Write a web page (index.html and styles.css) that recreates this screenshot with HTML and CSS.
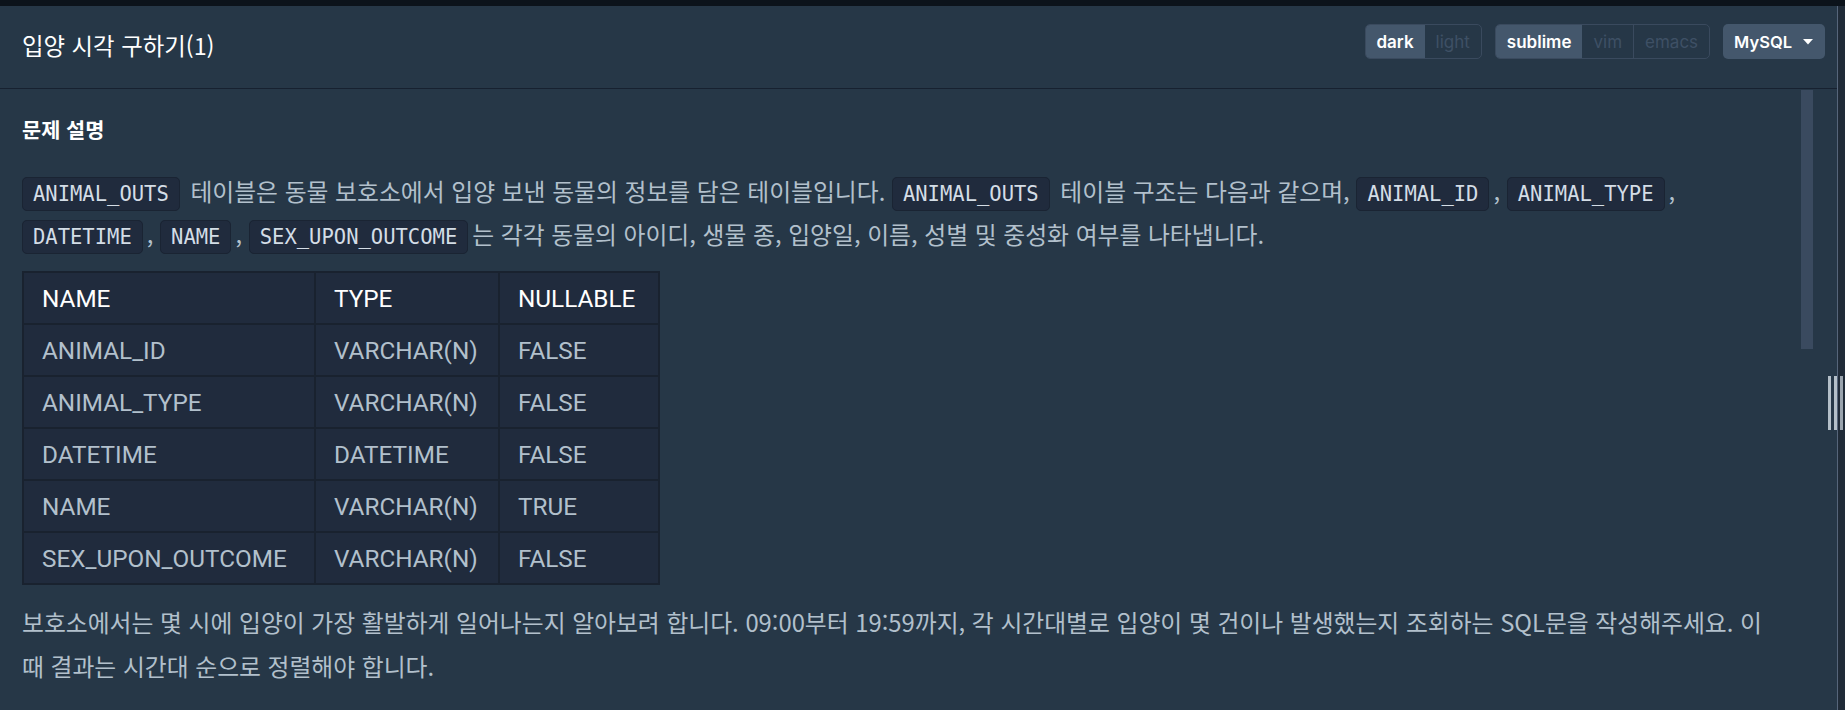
FILE: index.html
```html
<!DOCTYPE html>
<html lang="ko">
<head>
<meta charset="utf-8">
<title>입양 시각 구하기(1)</title>
<link rel="stylesheet" href="styles.css">
</head>
<body>
<div class="topbar"></div>
<div class="app">
  <div class="pane">
    <header class="head">
      <h1 class="title">입양 시각 구하기(1)</h1>
      <div class="controls">
        <div class="seg"><span class="opt on">dark</span><span class="opt">light</span></div>
        <div class="seg"><span class="opt on">sublime</span><span class="opt">vim</span><span class="opt sep">emacs</span></div>
        <button class="lang">MySQL<svg class="caret" width="10" height="6" viewBox="0 0 10 6"><path d="M0 0h10L5 5.5z" fill="#fff"/></svg></button>
      </div>
    </header>
    <div class="body">
      <div class="content">
        <h5 class="section">문제 설명</h5>
        <p class="desc"><code>ANIMAL_OUTS</code> 테이블은 동물 보호소에서 입양 보낸 동물의 정보를 담은 테이블입니다. <code>ANIMAL_OUTS</code> 테이블 구조는 다음과 같으며, <code>ANIMAL_ID</code>, <code>ANIMAL_TYPE</code>, <code>DATETIME</code>, <code>NAME</code>, <code>SEX_UPON_OUTCOME</code>는 각각 동물의 아이디, 생물 종, 입양일, 이름, 성별 및 중성화 여부를 나타냅니다.</p>
        <table class="schema">
          <thead>
            <tr><th class="c1">NAME</th><th class="c2">TYPE</th><th class="c3">NULLABLE</th></tr>
          </thead>
          <tbody>
            <tr><td>ANIMAL_ID</td><td>VARCHAR(N)</td><td>FALSE</td></tr>
            <tr><td>ANIMAL_TYPE</td><td>VARCHAR(N)</td><td>FALSE</td></tr>
            <tr><td>DATETIME</td><td>DATETIME</td><td>FALSE</td></tr>
            <tr><td>NAME</td><td>VARCHAR(N)</td><td>TRUE</td></tr>
            <tr><td>SEX_UPON_OUTCOME</td><td>VARCHAR(N)</td><td>FALSE</td></tr>
          </tbody>
        </table>
        <p class="desc last">보호소에서는 몇 시에 입양이 가장 활발하게 일어나는지 알아보려 합니다. 09:00부터 19:59까지, 각 시간대별로 입양이 몇 건이나 발생했는지 조회하는 SQL문을 작성해주세요. 이때 결과는 시간대 순으로 정렬해야 합니다.</p>
      </div>
      <div class="scroll"><div class="thumb"></div></div>
    </div>
  </div>
  <div class="side">
    <div class="grip"><i></i><i></i><i></i></div>
  </div>
</div>
</body>
</html>
```

FILE: styles.css
```css
* { box-sizing: border-box; }
html, body {
  margin: 0;
  height: 100%;
  overflow: hidden;
  background: #263747;
  font-family: "Noto Sans CJK KR", "Noto Sans", sans-serif;
}
.topbar {
  height: 6px;
  background: #0c131b;
}
.app {
  display: flex;
  height: 704px;
}
.pane {
  width: 1838px;
  border-right: 1px solid #56657a;
  display: flex;
  flex-direction: column;
}
.side {
  flex: 1;
  background: #202b38;
  position: relative;
}
.grip {
  position: absolute;
  left: -10px;
  top: 370px;
  display: flex;
  gap: 3px;
}
.grip i {
  display: block;
  width: 3px;
  height: 54px;
  background: #b4bfc8;
}
.grip i:nth-child(3) { background: #9aa4ae; }

.head {
  height: 83px;
  flex: none;
  border-bottom: 1px solid #172130;
  display: flex;
  align-items: center;
  justify-content: space-between;
  padding: 0 12px 4px 22px;
}
.title {
  margin: 0;
  font-size: 23.4px;
  font-weight: 400;
  color: #fff;
  line-height: 30px;
}
.controls {
  align-self: flex-start;
  margin-top: 18px;
  display: flex;
  gap: 13px;
  font-family: Inter, "Noto Sans", sans-serif;
}
.seg {
  display: flex;
  height: 35px;
  border: 1px solid #3a4a5e;
  border-radius: 5px;
  overflow: hidden;
}
.opt {
  display: flex;
  align-items: center;
  padding: 0 11px;
  font-size: 17px;
  color: #3e5065;
}
.opt.on {
  background: #44576c;
  color: #fff;
  font-weight: 600;
}
.opt.sep { border-left: 1px solid #3a4a5e; }
.lang {
  display: flex;
  align-items: center;
  gap: 11px;
  height: 35px;
  padding: 0 12px 0 11px;
  border: 0;
  border-radius: 5px;
  background: #44576c;
  color: #fff;
  font-family: Inter, "Noto Sans", sans-serif;
  font-size: 16.5px;
  font-weight: 600;
}

.body {
  flex: 1;
  display: flex;
  min-height: 0;
}
.content {
  flex: 1;
  padding: 26px 22px 0 22px;
  overflow: hidden;
}
.scroll {
  width: 36px;
  flex: none;
}
.thumb {
  width: 12px;
  height: 259px;
  margin-top: 1px;
  background: #3a4a5f;
}
.section {
  margin: 0 0 26px;
  font-size: 20.8px;
  font-weight: 700;
  color: #fff;
  line-height: 28px;
}
.desc {
  margin: 0;
  font-size: 23.8px;
  line-height: 43px;
  color: #b2c0cc;
}
.desc.last { line-height: 44px; }
code {
  font-family: "DejaVu Sans Mono", monospace;
  font-size: 20.5px;
  line-height: 24px;
  padding: 4px 10px;
  margin: 0 4px 0 0;
  background: #202b3d;
  border: 1px solid #1a2433;
  border-radius: 5px;
  color: #d4dde6;
}
.schema {
  margin: 16px 0 15px;
  border-collapse: collapse;
  background: #202b3d;
  font-family: Roboto, "Noto Sans", sans-serif;
  font-size: 24.3px;
}
.schema th, .schema td {
  height: 52px;
  padding: 0 18px;
  text-align: left;
  border: 2px solid #19222f;
  color: #b2c0cc;
  font-weight: 400;
}
.schema th { color: #fff; }
.c1 { width: 292px; }
.c2 { width: 184px; }
.c3 { width: 160px; }
```
